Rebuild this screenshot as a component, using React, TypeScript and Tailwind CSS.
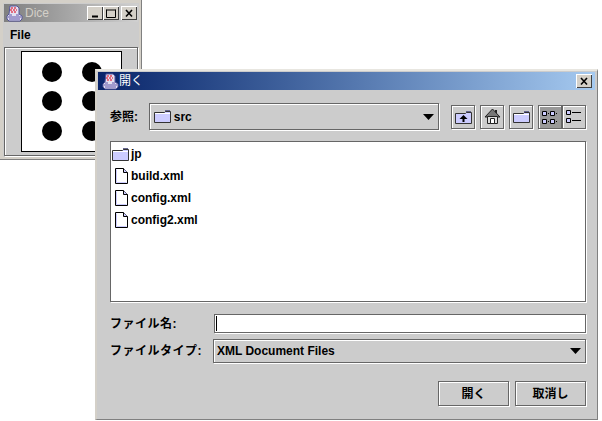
import React from "react";

const font = { fontFamily: '"Liberation Sans","Noto Sans CJK JP",sans-serif' };

function AppIcon() {
  return (
    <svg width="17" height="17" viewBox="0 0 17 17" className="shrink-0">
      <path d="M4 1h7l2 2v6l3 2v3l-2 2H3l-2-2v-3l2-2z" fill="#e4e0f0" stroke="#55559a" strokeWidth="1" />
      <path d="M5 3h6M4 5h7M5 7h5" stroke="#e2475c" strokeWidth="1.6" strokeDasharray="2 1" />
      <path d="M3 10h3M10 10h3M2 12h13M3 14h11" stroke="#5f55aa" strokeWidth="1" />
    </svg>
  );
}

function WinBtn({ kind }: { kind: "min" | "max" | "close" }) {
  return (
    <div className="w-4 h-[14px] bg-[#d4d0c8] shadow-[inset_1px_1px_0_#fff,inset_-1px_-1px_0_#404040] flex items-center justify-center">
      <svg width="10" height="9" viewBox="0 0 10 9">
        {kind === "min" && <path d="M2 7.5h6" stroke="#000" strokeWidth="2" />}
        {kind === "max" && <path d="M.5 1h9M.5.5v8h9v-8" fill="none" stroke="#000" strokeWidth="1" />}
        {kind === "close" && <path d="M2 1l6 6.5M8 1L2 7.5" stroke="#000" strokeWidth="1.6" />}
      </svg>
    </div>
  );
}

function Folder() {
  return (
    <svg width="17" height="13" viewBox="0 0 17 13" className="shrink-0">
      <path d="M11 0h5v2h-5z" fill="#66668f" />
      <path d="M.5 2.5h10l1-1h5v11H.5z" fill="#ccccff" stroke="#333" strokeWidth="1" />
      <path d="M1 3.5h15" stroke="#fff" />
    </svg>
  );
}

function FileIcon() {
  return (
    <svg width="13" height="16" viewBox="0 0 13 16" className="shrink-0">
      <path d="M.5.5h8l4 4v11H.5z" fill="#fff" stroke="#000" />
      <path d="M8.5.5v4h4" fill="#ccccff" stroke="#000" />
      <path d="M1.5 14.5h10" stroke="#ccccff" />
      <path d="M1.5 1.5v13" stroke="#ccccff" />
    </svg>
  );
}

function Arrow() {
  return (
    <svg width="11" height="6" viewBox="0 0 11 6">
      <path d="M0 0h11L5.5 6z" fill="#000" />
    </svg>
  );
}

function ToolBtn({ children, active }: { children: React.ReactNode; active?: boolean }) {
  return (
    <div
      className={`w-6 h-6 flex items-center justify-center border border-[#666] shadow-[1px_1px_0_#fff,inset_1px_1px_0_#fff] ${active ? "bg-[#999]" : "bg-[#ccc]"}`}
    >
      {children}
    </div>
  );
}

const rows = [
  { name: "jp", folder: true },
  { name: "build.xml" },
  { name: "config.xml" },
  { name: "config2.xml" },
];

export default function App() {
  return (
    <div style={font} className="relative w-[602px] h-[421px] bg-white overflow-hidden text-[12px] font-bold text-black">
      {/* Dice window */}
      <div className="absolute left-0 top-0 w-[142px] h-[160px] bg-[#ccc] border-r border-b border-[#808080] shadow-[inset_-2px_-2px_0_#d4d0c8,inset_3px_3px_0_#d4d0c8] flex flex-col pt-[4px] pl-[4px] pr-[3px] pb-[3px]">
        <div className="h-[18px] shrink-0 flex items-center pl-[2px] pr-[1px] bg-gradient-to-r from-[#808080] to-[#d0d0d0]">
          <AppIcon />
          <span className="ml-[2px] font-normal text-[#d4d0c8] flex-1">Dice</span>
          <WinBtn kind="min" />
          <WinBtn kind="max" />
          <div className="w-[2px]" />
          <WinBtn kind="close" />
        </div>
        <div className="h-[25px] shrink-0 flex items-center pl-[6px]">File</div>
        <div className="flex-1 border border-[#666] shadow-[1px_1px_0_#fff,inset_1px_1px_0_#fff] flex justify-center items-center">
          <div className="w-[101px] h-[101px] bg-white border border-black grid grid-cols-2 grid-rows-3 pl-[10px] pr-[9px] py-[5px]">
            {[0, 1, 2, 3, 4, 5].map((i) => (
              <div key={i} className="flex items-center justify-center">
                <div className="w-5 h-5 rounded-full bg-black" />
              </div>
            ))}
          </div>
        </div>
      </div>

      {/* Open dialog */}
      <div className="absolute left-[95px] top-[69px] w-[503px] h-[351px] bg-[#ccc] border-r border-b border-[#808080] border-t-2 border-t-[#e8e6e0] border-l-2 border-l-[#d4d0c8] flex flex-col">
        <div className="mt-[1px] ml-[1px] mr-[2px] h-[18px] shrink-0 flex items-center pl-[4px] pr-[3px] bg-gradient-to-r from-[#0a246a] to-[#a6caf0]">
          <AppIcon />
          <span className="font-normal text-white flex-1">開く</span>
          <WinBtn kind="close" />
        </div>
        <div className="flex-1 flex flex-col pl-[13px] pr-[11px]">
          {/* toolbar row */}
          <div className="flex items-center mt-[13px] h-[27px]">
            <span className="w-[39px]">参照:</span>
            <div className="w-[292px] h-[27px] border border-[#666] shadow-[1px_1px_0_#fff,inset_1px_1px_0_#fff] flex items-center pl-[4px] pr-[4px]">
              <Folder />
              <span className="ml-[3px] flex-1">src</span>
              <Arrow />
            </div>
            <div className="ml-[12px] flex">
              <ToolBtn>
                <svg width="17" height="14" viewBox="0 0 17 14">
                  <path d="M11 1h5v2h-5z" fill="#66668f" />
                  <path d="M.5 3.5h10l1-1h5v11H.5z" fill="#ccccff" stroke="#333" />
                  <path d="M8.5 5l4 4h-8zM7.5 9h2v3h-2z" fill="#000" />
                </svg>
              </ToolBtn>
              <div className="w-[5px]" />
              <ToolBtn>
                <svg width="17" height="17" viewBox="0 0 17 17">
                  <path d="M11 2h2v4h-2z" fill="#222" />
                  <path d="M1 9l7.5-8 7.5 8z" fill="#777" stroke="#222" />
                  <path d="M3.5 8.5h10v7h-10z" fill="#ddd" stroke="#222" />
                  <path d="M6.5 10.5h4v5h-4z" fill="#fff" stroke="#222" />
                </svg>
              </ToolBtn>
              <div className="w-[5px]" />
              <ToolBtn>
                <svg width="17" height="14" viewBox="0 0 17 14">
                  <path d="M11 1h5v2h-5z" fill="#66668f" />
                  <path d="M.5 3.5h10l1-1h5v10H.5z" fill="#ccccff" stroke="#333" />
                  <path d="M1 4.5h15" stroke="#fff" />
                </svg>
              </ToolBtn>
              <div className="w-[5px]" />
              <ToolBtn active>
                <svg width="16" height="15" viewBox="0 0 16 15" fill="#ccccff" stroke="#000">
                  <path d="M.5 2.5h4v4h-4zM8.5 2.5h4v4h-4zM.5 10.5h4v4h-4zM8.5 10.5h4v4h-4z" />
                  <path d="M6 4.5h1M14 4.5h1M6 12.5h1M14 12.5h1" />
                </svg>
              </ToolBtn>
              <ToolBtn>
                <svg width="16" height="15" viewBox="0 0 16 15" fill="#ccccff" stroke="#000">
                  <path d="M.5 1.5h4v4h-4zM.5 9.5h4v4h-4z" />
                  <path d="M6 3.5h9M6 11.5h9" />
                </svg>
              </ToolBtn>
            </div>
          </div>

          {/* file list */}
          <div className="mt-[11px] h-[161px] bg-white border border-[#666] shadow-[1px_1px_0_#fff] flex flex-col pt-[1px] pl-[1px]">
            {rows.map((r) => (
              <div key={r.name} className="h-[22px] flex items-center">
                <div className={`w-[19px] flex ${r.folder ? "justify-start" : "justify-center"}`}>{r.folder ? <Folder /> : <FileIcon />}</div>
                <span>{r.name}</span>
              </div>
            ))}
          </div>

          {/* fields */}
          <div className="mt-[12px] flex items-center h-[19px]">
            <span className="w-[104px] shrink-0 tracking-[0.5px]">ファイル名:</span>
            <div className="flex-1 h-[19px] bg-white border border-[#666] shadow-[1px_1px_0_#fff] pl-[1px] py-[1px]">
              <div className="w-[1px] h-full bg-black" />
            </div>
          </div>
          <div className="mt-[6px] flex items-center h-[24px]">
            <span className="w-[103px] shrink-0 tracking-[0.5px]">ファイルタイプ:</span>
            <div className="flex-1 h-[24px] border border-[#666] shadow-[1px_1px_0_#fff,inset_1px_1px_0_#fff] flex items-center pl-[3px] pr-[4px]">
              <span className="flex-1">XML Document Files</span>
              <Arrow />
            </div>
          </div>

          {/* buttons */}
          <div className="mt-[18px] flex justify-end gap-[6px]">
            <div className="w-[71px] h-[25px] border border-[#666] shadow-[1px_1px_0_#fff,inset_1px_1px_0_#fff] flex items-center justify-center">開く</div>
            <div className="w-[71px] h-[25px] border border-[#666] shadow-[1px_1px_0_#fff,inset_1px_1px_0_#fff] flex items-center justify-center">取消し</div>
          </div>
        </div>
      </div>
    </div>
  );
}
